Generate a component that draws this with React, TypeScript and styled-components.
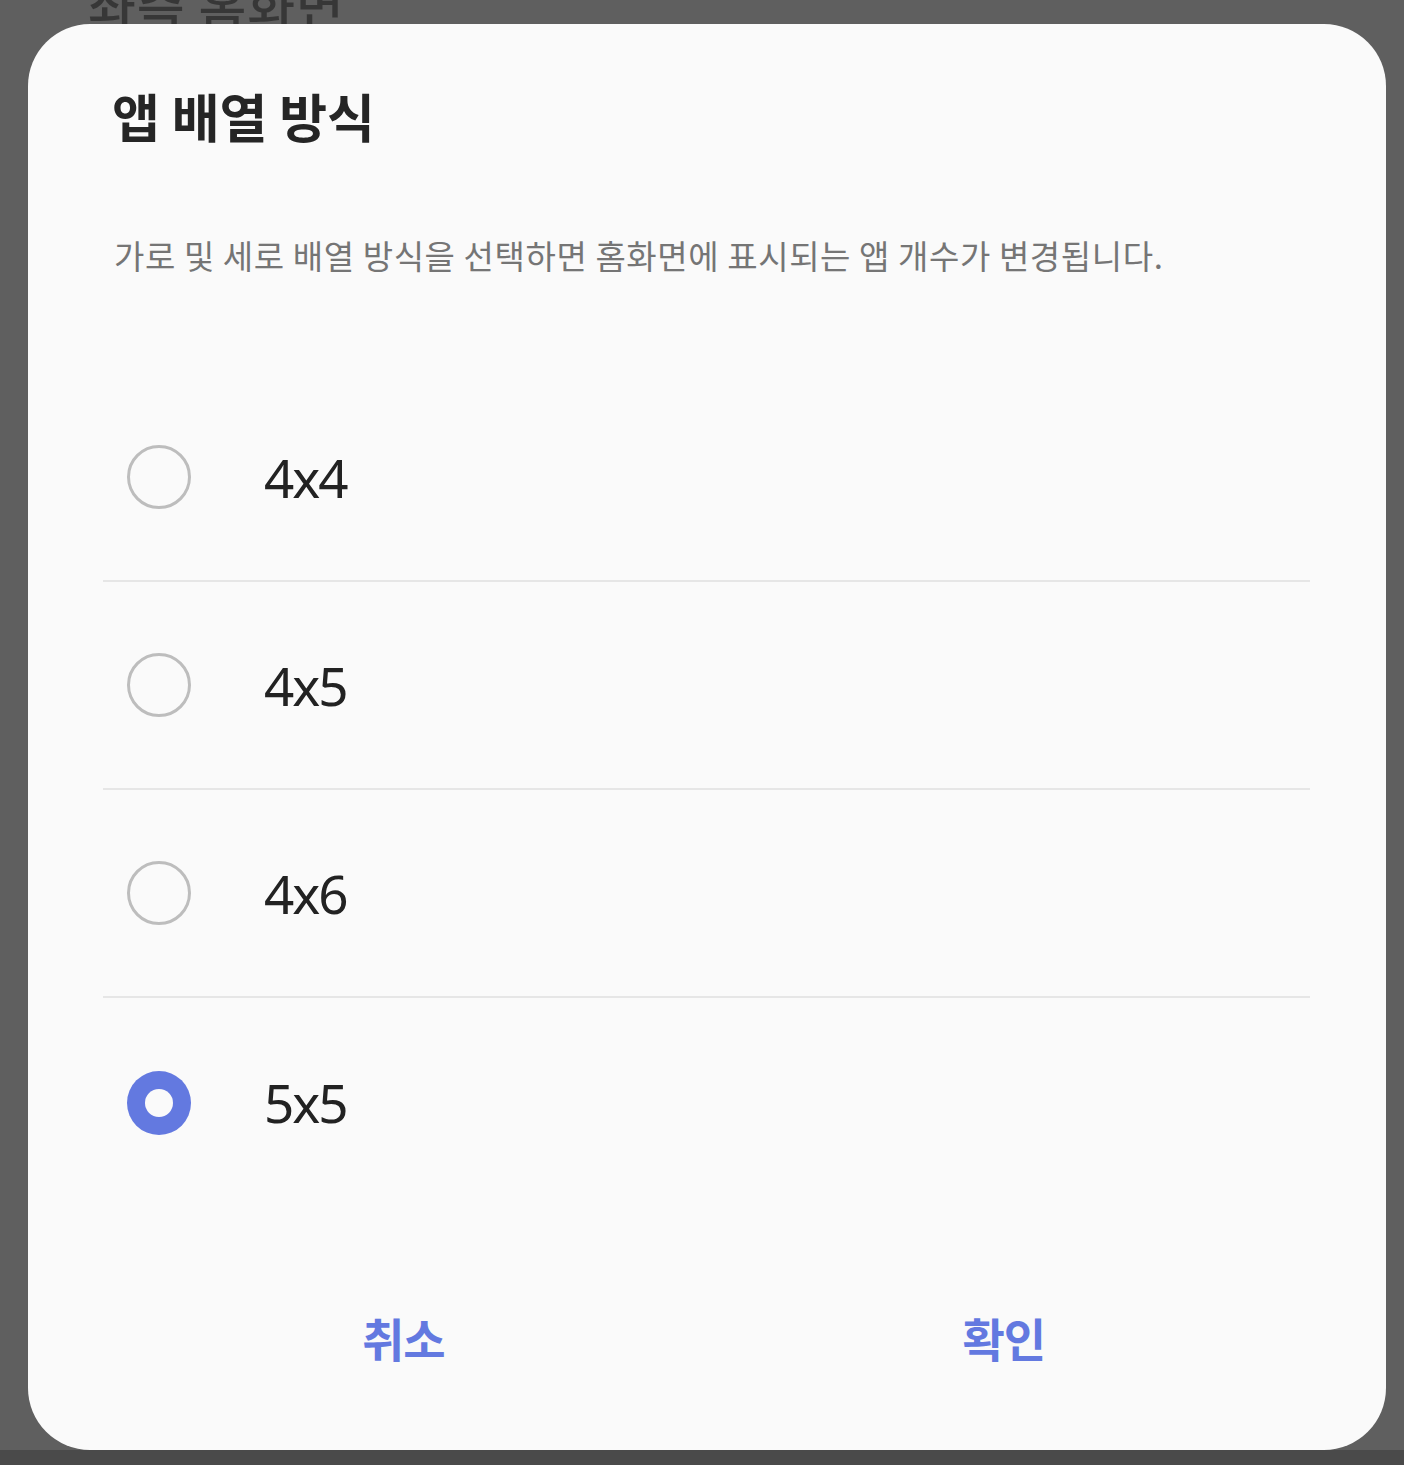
import React from "react";
import styled, { createGlobalStyle } from "styled-components";

const Global = createGlobalStyle`
  html, body { margin: 0; padding: 0; }
  body {
    background: #5f5f5f;
    font-family: "Noto Sans CJK KR", "Noto Sans", sans-serif;
    width: 1404px;
    height: 1465px;
    overflow: hidden;
  }
`;

const Screen = styled.div`
  position: relative;
  width: 1404px;
  height: 1465px;
  background: #5f5f5f;
  overflow: hidden;
`;

const BehindTitle = styled.div`
  position: absolute;
  left: 88px;
  top: -34px;
  font-size: 52px;
  font-weight: 500;
  color: #1e1e1e;
  opacity: 0.6;
  letter-spacing: 1px;
`;

const NavStrip = styled.div`
  position: absolute;
  left: 0;
  right: 0;
  bottom: 0;
  height: 15px;
  background: #4a4a4a;
`;

const Dialog = styled.div`
  position: absolute;
  left: 28px;
  top: 24px;
  width: 1358px;
  height: 1426px;
  box-sizing: border-box;
  background: #fafafa;
  border-radius: 62px;
  padding: 61px 76px 0 75px;
  display: flex;
  flex-direction: column;
`;

const Title = styled.h1`
  margin: 0 0 0 9px;
  font-size: 52px;
  line-height: 62px;
  font-weight: 700;
  color: #252525;
  letter-spacing: 0;
`;

const Description = styled.p`
  margin: 84px 0 0 11px;
  font-size: 33px;
  line-height: 48px;
  font-weight: 400;
  color: #757575;
  letter-spacing: 0.6px;
  white-space: nowrap;
`;

const List = styled.div`
  margin-top: 95px;
  display: flex;
  flex-direction: column;
`;

const Row = styled.div<{ $last?: boolean }>`
  height: 208px;
  box-sizing: border-box;
  display: flex;
  align-items: center;
  padding-left: 24px;
  border-bottom: ${(p) => (p.$last ? "none" : "2px solid #e6e6e6")};
`;

const Radio = styled.span<{ $checked?: boolean }>`
  width: 64px;
  height: 64px;
  box-sizing: border-box;
  border-radius: 50%;
  flex: none;
  display: flex;
  align-items: center;
  justify-content: center;
  border: ${(p) => (p.$checked ? "none" : "3.5px solid #bdbdbd")};
  background: ${(p) => (p.$checked ? "#6379e0" : "transparent")};
  margin-top: ${(p) => (p.$checked ? "2px" : "0")};
  &::after {
    content: "";
    display: ${(p) => (p.$checked ? "block" : "none")};
    width: 28px;
    height: 28px;
    border-radius: 50%;
    background: #fafafa;
  }
`;

const Label = styled.span`
  margin-left: 73px;
  font-family: "Noto Sans", sans-serif;
  font-size: 53px;
  font-weight: 400;
  color: #222222;
  letter-spacing: -2px;
`;

const Footer = styled.div`
  margin-top: 81px;
  padding: 0 6px 0 0;
  display: grid;
  grid-template-columns: 1fr 1fr;
`;

const Button = styled.button`
  border: none;
  background: transparent;
  height: 100px;
  font-family: "Noto Sans CJK KR", sans-serif;
  font-size: 46px;
  font-weight: 700;
  color: #6379e0;
  cursor: pointer;
  letter-spacing: -1px;
`;

const options = ["4x4", "4x5", "4x6", "5x5"];

export default function App() {
  const selected = "5x5";
  return (
    <Screen>
      <Global />
      <BehindTitle>좌측 홈화면</BehindTitle>
      <NavStrip />
      <Dialog>
        <Title>앱 배열 방식</Title>
        <Description>
          가로 및 세로 배열 방식을 선택하면 홈화면에 표시되는 앱 개수가 변경됩니다.
        </Description>
        <List>
          {options.map((o, i) => (
            <Row key={o} $last={i === options.length - 1}>
              <Radio $checked={o === selected} />
              <Label>{o}</Label>
            </Row>
          ))}
        </List>
        <Footer>
          <Button>취소</Button>
          <Button>확인</Button>
        </Footer>
      </Dialog>
    </Screen>
  );
}
